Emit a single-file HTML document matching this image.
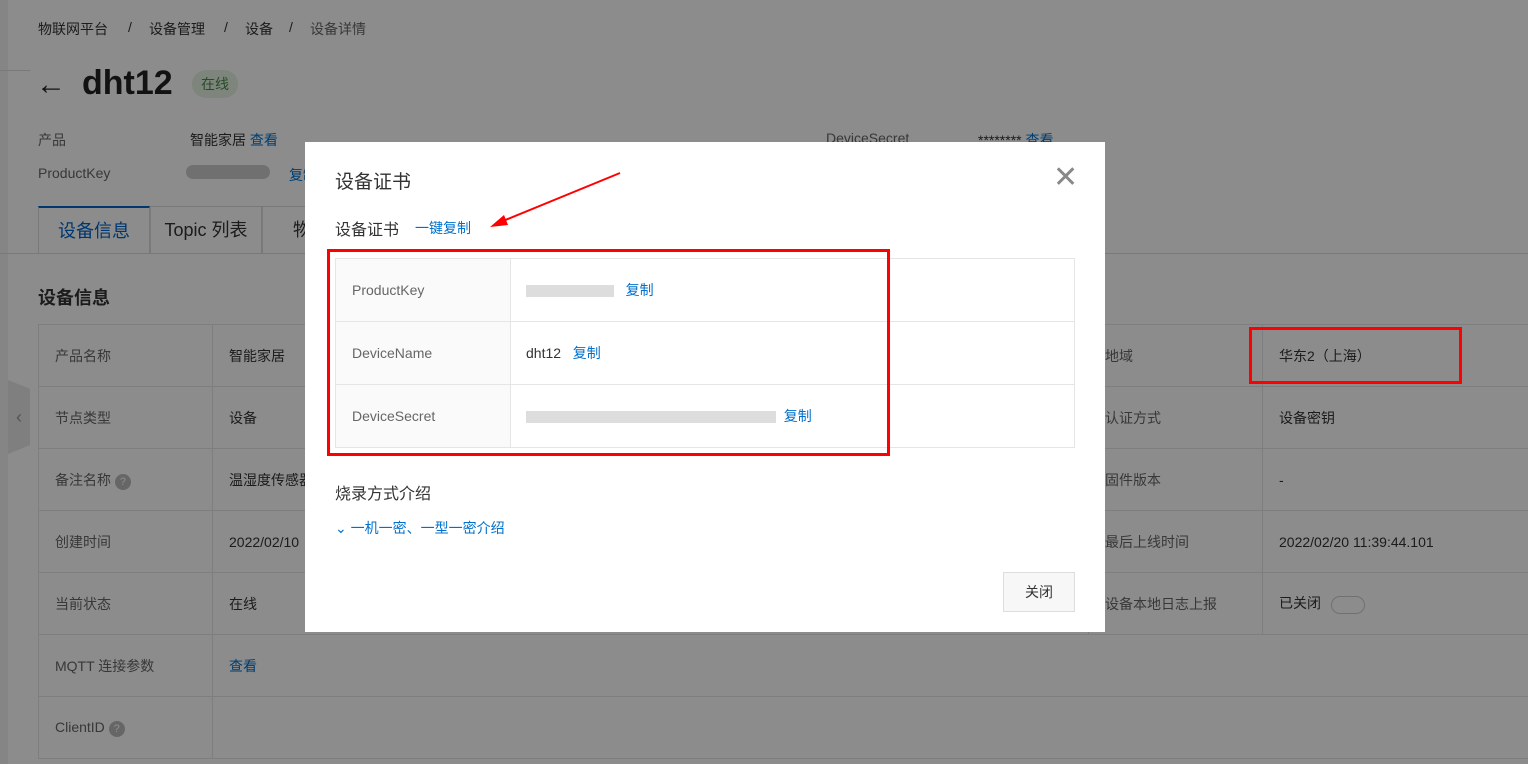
<!DOCTYPE html>
<html><head><meta charset="utf-8"><style>
*{box-sizing:border-box;margin:0;padding:0}
body{width:1528px;height:764px;overflow:hidden;position:relative;background:#fff;font-family:"Liberation Sans","Noto Sans CJK SC",sans-serif;color:#333;font-size:14px}
.a{position:absolute;white-space:nowrap}
.blue{color:#0070cc}
.gl{color:#666}
.ov{position:absolute;left:0;top:0;width:1528px;height:764px;background:rgba(0,0,0,0.45)}
td{border:1px solid #e5e5e5}
</style></head><body>
<div class="a" style="left:0;top:0;width:8px;height:764px;background:#f2f2f2"></div>
<div class="a" style="left:0;top:70px;width:30px;border-top:1px solid #ddd"></div>
<div class="a" style="left:38px;top:19px;font-size:14px">物联网平台</div>
<div class="a" style="left:128px;top:19px">/</div>
<div class="a" style="left:149px;top:19px">设备管理</div>
<div class="a" style="left:224px;top:19px">/</div>
<div class="a" style="left:245px;top:19px">设备</div>
<div class="a" style="left:289px;top:19px">/</div>
<div class="a gl" style="left:310px;top:19px">设备详情</div>
<div class="a" style="left:36px;top:68px;font-size:30px;color:#222">←</div>
<div class="a" style="left:82px;top:64px;font-size:34px;font-weight:bold;color:#222">dht12</div>
<div class="a" style="left:192px;top:70px;width:46px;height:28px;border-radius:14px;background:#e3f2e3;color:#4a8a4a;font-size:14px;line-height:28px;text-align:center">在线</div>
<div class="a gl" style="left:38px;top:130px">产品</div>
<div class="a" style="left:190px;top:130px">智能家居 <span class="blue">查看</span></div>
<div class="a gl" style="left:38px;top:165px">ProductKey</div>
<div class="a" style="left:186px;top:165px;width:84px;height:14px;background:#ccc;border-radius:7px"></div>
<div class="a blue" style="left:289px;top:165px">复制</div>
<div class="a gl" style="left:826px;top:130px">DeviceSecret</div>
<div class="a" style="left:978px;top:130px">******** <span class="blue">查看</span></div>
<div class="a" style="left:38px;top:206px;width:112px;height:48px;border:1px solid #ddd;border-top:2px solid #0064c8;font-size:18px;color:#0064c8;text-align:center;line-height:46px">设备信息</div>
<div class="a" style="left:150px;top:206px;width:112px;height:48px;border:1px solid #ddd;font-size:18px;text-align:center;line-height:46px">Topic 列表</div>
<div class="a" style="left:262px;top:206px;width:60px;height:48px;border:1px solid #ddd;font-size:18px;line-height:46px;padding-left:30px">物</div>
<div class="a" style="left:0;top:253px;width:1528px;border-top:1px solid #ddd"></div>
<div class="a" style="left:38px;top:284px;font-size:18px;font-weight:bold">设备信息</div>
<table class="a" style="left:38px;top:324px;width:1500px;border-collapse:collapse;font-size:14px">
<tr style="height:62px"><td style="width:174px;padding-left:16px" class="gl">产品名称</td><td style="width:876px;padding-left:16px">智能家居</td><td style="width:174px;padding-left:16px" class="gl">地域</td><td style="padding-left:16px">华东2（上海）</td></tr>
<tr style="height:62px"><td style="padding-left:16px" class="gl">节点类型</td><td style="padding-left:16px">设备</td><td style="padding-left:16px" class="gl">认证方式</td><td style="padding-left:16px">设备密钥</td></tr>
<tr style="height:62px"><td style="padding-left:16px" class="gl">备注名称 <span style="display:inline-block;width:16px;height:16px;border-radius:8px;background:#bbb;color:#fff;font-size:11px;text-align:center;line-height:16px">?</span></td><td style="padding-left:16px">温湿度传感器</td><td style="padding-left:16px" class="gl">固件版本</td><td style="padding-left:16px">-</td></tr>
<tr style="height:62px"><td style="padding-left:16px" class="gl">创建时间</td><td style="padding-left:16px">2022/02/10</td><td style="padding-left:16px" class="gl">最后上线时间</td><td style="padding-left:16px">2022/02/20 11:39:44.101</td></tr>
<tr style="height:62px"><td style="padding-left:16px" class="gl">当前状态</td><td style="padding-left:16px">在线</td><td style="padding-left:16px" class="gl">设备本地日志上报</td><td style="padding-left:16px">已关闭 <span style="display:inline-block;width:34px;height:18px;border:1px solid #ccc;border-radius:9px;vertical-align:middle;margin-left:6px"></span></td></tr>
<tr style="height:62px"><td style="padding-left:16px" class="gl">MQTT 连接参数</td><td colspan="3" style="padding-left:16px" class="blue">查看</td></tr>
<tr style="height:62px"><td style="padding-left:16px" class="gl">ClientID <span style="display:inline-block;width:16px;height:16px;border-radius:8px;background:#bbb;color:#fff;font-size:11px;text-align:center;line-height:16px">?</span></td><td colspan="3"></td></tr>
</table>
<div class="a" style="left:8px;top:380px;width:22px;height:74px;background:#e8e8e8;clip-path:polygon(0 0,100% 12%,100% 88%,0 100%);color:#999;font-size:18px;line-height:74px;text-align:center">‹</div>
<div class="ov"></div>
<div class="a" style="left:1249px;top:327px;width:213px;height:57px;border:3px solid #f00"></div>
<div class="a" style="left:305px;top:142px;width:800px;height:490px;background:#fff">
 <div class="a" style="left:30px;top:25px;font-size:19px;color:#333">设备证书</div>
 <div class="a" style="left:748px;top:18px;font-size:30px;color:#888;font-weight:300">✕</div>
 <div class="a" style="left:30px;top:74px;font-size:16px;color:#333">设备证书</div>
 <div class="a blue" style="left:110px;top:76px;font-size:14px">一键复制</div>
 <table class="a" style="left:30px;top:116px;width:740px;border-collapse:collapse;font-size:14px">
  <tr style="height:63px"><td style="width:175px;background:#fafafa;padding-left:16px" class="gl">ProductKey</td><td style="padding-left:15px"><span style="display:inline-block;width:88px;height:12px;background:#ddd;vertical-align:middle"></span> &nbsp;&nbsp;<span class="blue">复制</span></td></tr>
  <tr style="height:63px"><td style="background:#fafafa;padding-left:16px" class="gl">DeviceName</td><td style="padding-left:15px">dht12 &nbsp;&nbsp;<span class="blue">复制</span></td></tr>
  <tr style="height:63px"><td style="background:#fafafa;padding-left:16px" class="gl">DeviceSecret</td><td style="padding-left:15px"><span style="display:inline-block;width:250px;height:12px;background:#ddd;vertical-align:middle"></span> &nbsp;<span class="blue">复制</span></td></tr>
 </table>
 <div class="a" style="left:30px;top:338px;font-size:16px;color:#333">烧录方式介绍</div>
 <div class="a blue" style="left:30px;top:376px;font-size:14px">⌄ 一机一密、一型一密介绍</div>
 <div class="a" style="left:698px;top:430px;width:72px;height:40px;border:1px solid #ddd;background:#f7f7f7;text-align:center;line-height:38px">关闭</div>
</div>
<div class="a" style="left:327px;top:249px;width:563px;height:207px;border:3px solid #f00"></div>
<svg class="a" style="left:480px;top:165px" width="150" height="70"><line x1="140" y1="8" x2="18" y2="58" stroke="#f00" stroke-width="2"/><polygon points="10,62 24,50 28,60" fill="#f00"/></svg>
</body></html>
